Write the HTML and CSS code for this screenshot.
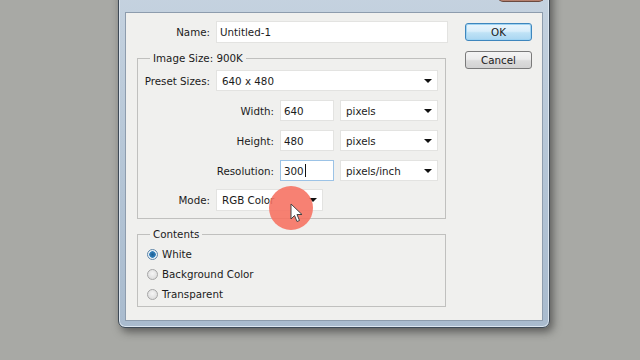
FILE: index.html
```html
<!DOCTYPE html>
<html lang="en">
<head>
    <meta charset="UTF-8">
    <meta name="viewport" content="width=device-width, initial-scale=1.0">
    <title>New</title>
    <link rel="stylesheet" href="styles.css">
</head>
<body>
<div class="desktop">
    <div class="window">
        <div class="titlebar">
            <span class="title">New</span>
            <span class="closebtn"></span>
        </div>
        <div class="client">
            <div class="main">
                <div class="row namerow">
                    <span class="lbl lbl-name">Name:</span>
                    <div class="field namefield">Untitled-1</div>
                </div>

                <fieldset class="group sizegroup">
                    <legend>Image Size: 900K</legend>
                    <div class="row presetrow">
                        <span class="lbl lbl-short">Preset Sizes:</span>
                        <div class="select preset">640 x 480<span class="arrow"></span></div>
                    </div>
                    <div class="row">
                        <span class="lbl lbl-long">Width:</span>
                        <div class="field numfield">640</div>
                        <div class="select units">pixels<span class="arrow"></span></div>
                    </div>
                    <div class="row">
                        <span class="lbl lbl-long">Height:</span>
                        <div class="field numfield">480</div>
                        <div class="select units">pixels<span class="arrow"></span></div>
                    </div>
                    <div class="row">
                        <span class="lbl lbl-long">Resolution:</span>
                        <div class="field numfield focused">300<span class="caret"></span></div>
                        <div class="select units">pixels/inch<span class="arrow"></span></div>
                    </div>
                    <div class="row moderow">
                        <span class="lbl lbl-short">Mode:</span>
                        <div class="select mode">RGB Color<span class="arrow"></span></div>
                    </div>
                </fieldset>

                <fieldset class="group contentsgroup">
                    <legend>Contents</legend>
                    <div class="radiorow"><span class="radio checked"></span>White</div>
                    <div class="radiorow"><span class="radio"></span>Background Color</div>
                    <div class="radiorow"><span class="radio"></span>Transparent</div>
                </fieldset>
            </div>

            <div class="buttons">
                <div class="btn okbtn">OK</div>
                <div class="btn">Cancel</div>
            </div>
        </div>
    </div>

    <!-- click highlight + mouse pointer -->
    <div class="clickspot"></div>
    <svg class="pointer" width="13" height="20" viewBox="0 0 13 20">
        <path d="M1 1 L1 16 L4.5 12.5 L7 18.5 L9.5 17.5 L7 11.5 L12 11.5 Z" fill="#fff" stroke="#444" stroke-width="1" stroke-linejoin="round"/>
    </svg>
</div>
</body>
</html>
```

FILE: styles.css
```css
body{
    margin:0;
    background-color:#a8a9a5;
    font-family:"DejaVu Sans", Verdana, sans-serif;
    font-size:10.3px;
    color:#1b1b1b;
}

.desktop{
    position:relative;
    width:640px;
    height:360px;
    overflow:hidden;
}

.window{
    width:432px;
    margin-left:118px;
    margin-top:-20px;
    box-sizing:border-box;
    padding:0 6px 6px 6px;
    border:1px solid #3e4a57;
    border-radius:7px;
    background:linear-gradient(#c6d3e0, #b3c4d5 60%, #a9bbce);
    box-shadow:3px 4px 9px rgba(30,30,30,0.55), inset 0 0 0 1px #dbe5ef;
}

.titlebar{
    display:flex;
    height:31px;
    align-items:flex-start;
}

.title{
    margin-top:8px;
    margin-left:3px;
    font-size:12px;
    color:#111;
}

.closebtn{
    margin-left:auto;
    margin-right:-1px;
    width:46px;
    height:21px;
    box-sizing:border-box;
    border:1px solid #6b4a40;
    border-top:none;
    border-radius:0 0 5px 5px;
    background:linear-gradient(#c79a8a, #b5806e);
}

.client{
    display:flex;
    height:309px;
    box-sizing:border-box;
    border:1px solid #8d9cad;
    background-color:#f0f0ee;
}

.main{
    padding:8px 0 0 11px;
    width:311px;
}

.row{
    display:flex;
    align-items:center;
    height:21px;
}

.lbl{
    text-align:right;
    margin-right:6px;
    white-space:nowrap;
}
.lbl-name{ width:73px; }
.lbl-short{ width:72px; }
.lbl-long{ width:136px; }

.namerow{ height:22px; }

.field, .select{
    box-sizing:border-box;
    height:100%;
    background-color:#fff;
    border:1px solid #e3e3e1;
    display:flex;
    align-items:center;
    white-space:nowrap;
}

.field{ padding-left:3px; }

.namefield{ width:232px; }

.numfield{ width:54px; }

.focused{
    border-color:#9cc3e6;
}

.caret{
    display:inline-block;
    width:1px;
    height:13px;
    margin-left:1px;
    background-color:#111;
}

.select{
    position:relative;
    padding-left:5px;
}
.preset{ width:222px; }
.units{ width:98px; margin-left:6px; }
.mode{ width:107px; height:22px; }

.arrow{
    position:absolute;
    right:5px;
    top:50%;
    margin-top:-2px;
    border-left:4px solid transparent;
    border-right:4px solid transparent;
    border-top:4px solid #111;
}

.group{
    margin:8px 0 0 0;
    padding:0 0 7px 0;
    width:309px;
    box-sizing:border-box;
    border:1px solid #c0c0be;
    border-radius:0;
}

.group legend{
    margin-left:12px;
    padding:0 3px;
    line-height:14px;
}

.sizegroup .row{ margin-top:9px; }
.sizegroup .presetrow{ margin-top:5px; }
.sizegroup .moderow{ margin-top:8px; height:22px; }

.contentsgroup{
    padding-bottom:2px;
}

.radiorow{
    display:flex;
    align-items:center;
    height:20px;
    padding-left:9px;
}
.radiorow:first-of-type{ margin-top:3px; }

.radio{
    width:11px;
    height:11px;
    box-sizing:border-box;
    border-radius:50%;
    border:1px solid #a6a6a6;
    background:radial-gradient(circle at 50% 40%, #f4f4f4, #d6d6d6);
    margin-right:4px;
}

.radio.checked{
    border-color:#5f86a8;
    background:radial-gradient(circle, #1f5d8f 0, #2a74ad 2px, #3b86c0 3px, #e3edf5 3.5px, #f4f7fa 5px);
}

.buttons{
    margin-left:17px;
    padding-top:10px;
}

.btn{
    width:67px;
    height:18px;
    box-sizing:border-box;
    border:1px solid #7a7a7a;
    border-radius:3px;
    background:linear-gradient(#f4f4f4 0, #ececec 45%, #dcdcdc 55%, #d2d2d2);
    display:flex;
    align-items:center;
    justify-content:center;
    margin-bottom:10px;
}

.okbtn{
    border-color:#3e86bd;
    background:linear-gradient(#eaf5fc 0, #d9eefb 45%, #bfe2f6 55%, #a9d6f1);
    box-shadow:inset 0 0 0 1px #9fd3f2;
}

.clickspot{
    position:absolute;
    left:269px;
    top:186px;
    width:44px;
    height:44px;
    border-radius:50%;
    background-color:rgba(246,112,96,0.88);
}

.pointer{
    position:absolute;
    left:290px;
    top:203px;
}
```
